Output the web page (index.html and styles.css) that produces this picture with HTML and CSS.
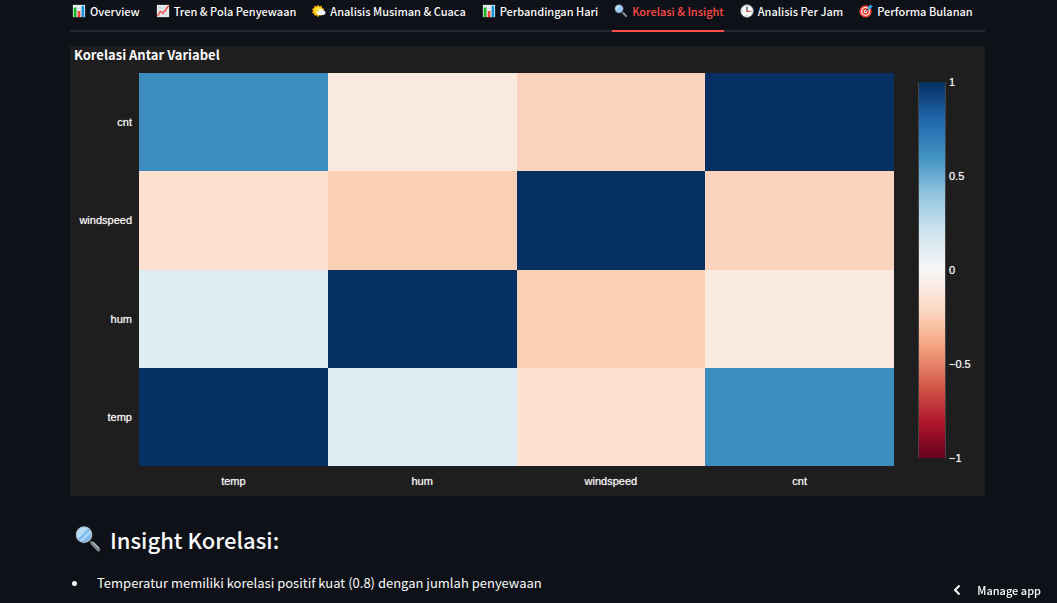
FILE: index.html
```html
<!DOCTYPE html>
<html lang="id">
<head>
<meta charset="utf-8">
<title>Korelasi &amp; Insight</title>
<link rel="stylesheet" href="styles.css">
</head>
<body>
<svg class="defs" aria-hidden="true">
  <symbol id="bars" viewBox="0 0 16 16">
    <path fill="#eceff1" d="M1 1h14v14H1z"/>
    <path stroke="#b0bec5" stroke-width=".5" d="M1 5h14M1 8.500h14M1 12h14M5 1v14M10.500 1v14"/>
    <path fill="#16b51e" d="M2 4h3v11H2z"/><path fill="#f44336" d="M6.500 8h3v7h-3z"/><path fill="#1593df" d="M11 2h3v13h-3z"/>
  </symbol>
  <symbol id="trend" viewBox="0 0 16 16">
    <path fill="#f1f3f4" d="M1 1h14v14H1z"/>
    <path stroke="#b4c0c6" stroke-width=".6" d="M1 4.500h14M1 8h14M1 11.500h14M4.500 1v14M8 1v14M11.500 1v14"/>
    <path fill="none" stroke="#f44336" stroke-width="1.500" d="M1.500 14 5 8.500l3 2L14.500 2"/>
  </symbol>
  <symbol id="sun" viewBox="0 0 16 16">
    <path fill="#ffb300" d="m7 .8 1.600 2 2.500-.7.400 2.500 2.500 1-1.200 2.200 1.200 2.300-2.500.9-.4 2.500-2.500-.6L7 15l-1.700-2.100-2.500.6-.4-2.500-2.400-1L1.200 7.800 0 5.600l2.400-1 .4-2.500 2.500.7z"/>
    <circle cx="7" cy="7.800" r="4.300" fill="#ffe038"/>
    <path fill="#f3f6f8" d="M7.500 12.500a2.300 2.300 0 0 1 0-4.500 3 3 0 0 1 5.600-.6 2.600 2.600 0 0 1 .5 5.100z"/>
  </symbol>
  <symbol id="lens" viewBox="0 0 32 32">
    <path stroke="#050607" stroke-width="7" stroke-linecap="round" d="m20 20 8 8"/>
    <path stroke="#546e7a" stroke-width="2.500" d="m17 17 3 3"/>
    <path stroke="#78868e" stroke-width="4.500" stroke-linecap="round" d="m21 21 7 7"/>
    <path stroke="#b0bec5" stroke-width="1.500" stroke-linecap="round" d="m22 20 6 6"/>
    <circle cx="11.500" cy="11" r="10" fill="#82bdf0" stroke="#17191c" stroke-width="1.500"/>
    <circle cx="11.500" cy="11" r="8.800" fill="none" stroke="#a9b8c1" stroke-width="1.200"/>
    <path fill="#b9def8" d="M3.500 12A8 8 0 0 1 16 4.300L5 15.500A8 8 0 0 1 3.500 12zM7 17.700 18.500 6.500l1 2L9 18.600z"/>
  </symbol>
  <symbol id="clock" viewBox="0 0 16 16">
    <circle cx="8" cy="8" r="7" fill="#fafafa" stroke="#cfd8dc"/>
    <path stroke="#78909c" d="M8 2v1.500M8 12.500V14M2 8h1.500M12.500 8H14"/>
    <path stroke="#263238" stroke-width="1.300" d="M8 3.500V8.500"/><path stroke="#e53935" stroke-width="1.300" d="M7.500 8.500H12"/>
  </symbol>
  <symbol id="target" viewBox="0 0 16 16">
    <circle cx="7.500" cy="8.500" r="7" fill="#f44336"/><circle cx="7.500" cy="8.500" r="5" fill="#fff"/>
    <circle cx="7.500" cy="8.500" r="3.800" fill="#f44336"/><circle cx="7.500" cy="8.500" r="1.800" fill="#fff"/>
    <path stroke="#455a64" stroke-width="1.300" d="m7 9 5-5"/>
    <path fill="#29a9e8" d="m10 4 3.500-4 .5 2 2 .5L12.500 6l-2 .2z"/>
  </symbol>
</svg>

<main class="page">
  <nav class="tabs" role="tablist">
    <button class="tab" role="tab"><svg class="icon"><use href="#bars"/></svg>Overview</button>
    <button class="tab" role="tab"><svg class="icon"><use href="#trend"/></svg>Tren &amp; Pola Penyewaan</button>
    <button class="tab" role="tab"><svg class="icon"><use href="#sun"/></svg>Analisis Musiman &amp; Cuaca</button>
    <button class="tab" role="tab"><svg class="icon"><use href="#bars"/></svg>Perbandingan Hari</button>
    <button class="tab active" role="tab" aria-selected="true"><svg class="icon"><use href="#lens"/></svg>Korelasi &amp; Insight</button>
    <button class="tab" role="tab"><svg class="icon"><use href="#clock"/></svg>Analisis Per Jam</button>
    <button class="tab" role="tab"><svg class="icon"><use href="#target"/></svg>Performa Bulanan</button>
  </nav>

  <figure class="chart">
    <figcaption class="chart-title">Korelasi Antar Variabel</figcaption>
    <div class="plot">
      <div class="y-axis"><span>cnt</span><span>windspeed</span><span>hum</span><span>temp</span></div>
      <div class="heatmap">
        <i class="strong"></i><i class="neg-1"></i><i class="neg-3"></i><i class="full"></i>
        <i class="neg-2"></i><i class="neg-4"></i><i class="full"></i><i class="neg-3"></i>
        <i class="weak"></i><i class="full"></i><i class="neg-4"></i><i class="neg-1"></i>
        <i class="full"></i><i class="weak"></i><i class="neg-2"></i><i class="strong"></i>
      </div>
      <div class="scale">
        <div class="scale-bar"></div>
        <div class="ticks"><span>1</span><span>0.5</span><span>0</span><span>−0.5</span><span>−1</span></div>
      </div>
      <div class="x-axis"><span>temp</span><span>hum</span><span>windspeed</span><span>cnt</span></div>
    </div>
  </figure>

  <h2 class="heading"><svg class="heading-icon"><use href="#lens"/></svg>Insight Korelasi:</h2>
  <ul class="insights">
    <li>Temperatur memiliki korelasi positif kuat (0.8) dengan jumlah penyewaan</li>
  </ul>
</main>

<button class="manage"><svg class="chevron" viewBox="0 0 8 12"><path d="M6.500 1.500 2 6l4.500 4.500"/></svg>Manage app</button>
</body>
</html>
```
FILE: styles.css
```css
* { box-sizing: border-box; }
html { background: #0e1117; overflow: hidden; }
body {
  margin: 0;
  color: #fafafa;
  font-family: "Noto Sans CJK SC", "Noto Sans", sans-serif;
}
button {
  padding: 0;
  border: 0;
  background: none;
  color: inherit;
  font-family: inherit;
  white-space: nowrap;
}
.defs { display: none; }
.page { padding: 0 72px 0 70px; }

.tabs {
  display: flex;
  gap: 14px;
  height: 32px;
  border-bottom: 2px solid #262730;
}
.tab {
  display: flex;
  align-items: center;
  height: 32px;
  padding-bottom: 8px;
  border-bottom: 2px solid transparent;
  font-size: 11px;
  font-weight: 500;
}
.tab.active { color: #ff4b4b; border-bottom-color: #ff4b4b; }
.icon { width: 14px; height: 14px; margin: 0 4px 0 2px; flex: none; }

.chart { margin: 14px 0 0; padding-bottom: 6px; background: #1e1e1e; }
.chart-title {
  height: 27px;
  padding-left: 4px;
  font-size: 13px;
  font-weight: 700;
  line-height: 18px;
}
.plot {
  display: grid;
  grid-template-columns: 69px 1fr 91px;
  grid-template-rows: 393px 24px;
  font-family: "Liberation Sans", Arial, sans-serif;
  font-size: 11px;
  line-height: 12px;
  text-shadow: 0 0 1px #aaa;
}
.y-axis { display: grid; grid-template-rows: repeat(4, 1fr); align-items: center; justify-items: end; padding-right: 7px; }
.heatmap { display: grid; grid-template: repeat(4, 1fr) / repeat(4, 1fr); }
.full { background: #053061; }
.strong { background: #3e8dc0; }
.weak { background: #dfecf3; }
.neg-1 { background: #fae9df; }
.neg-2 { background: #fce1d1; }
.neg-3 { background: #fbd2bb; }
.neg-4 { background: #fbceb6; }
.x-axis { grid-column: 2; display: grid; grid-template-columns: repeat(4, 1fr); justify-items: center; padding-top: 9px; }
.scale { display: flex; gap: 3px; padding: 9px 0 8px 24px; }
.scale-bar {
  width: 28px;
  border: solid #444;
  border-width: 0 1px;
  background: linear-gradient(#053061, #2166ac, #4393c3, #92c5de, #d1e5f0, #f7f7f7, #fddbc7, #f4a582, #d6604d, #b2182b, #67001f);
}
.ticks { display: flex; flex-direction: column; justify-content: space-between; margin: -6px 0; }

.heading {
  display: flex;
  align-items: center;
  gap: 8px;
  margin: 25px 0 0;
  padding-left: 4px;
  font-size: 22px;
  font-weight: 500;
  line-height: 36px;
}
.heading-icon { width: 28px; height: 28px; flex: none; }
.insights { margin: 15px 0 0; padding: 0; list-style: none; font-size: 13px; line-height: 22px; }
.insights li { display: flex; align-items: center; gap: 20px; padding-left: 2px; }
.insights li::before { content: ""; width: 5px; height: 5px; border-radius: 50%; background: currentColor; }

.manage {
  position: fixed;
  right: 16px;
  bottom: 0;
  display: flex;
  align-items: center;
  gap: 16px;
  height: 26px;
  font-size: 11px;
  font-weight: 500;
}
.chevron { width: 8px; height: 12px; fill: none; stroke: #fafafa; stroke-width: 2; }
```
